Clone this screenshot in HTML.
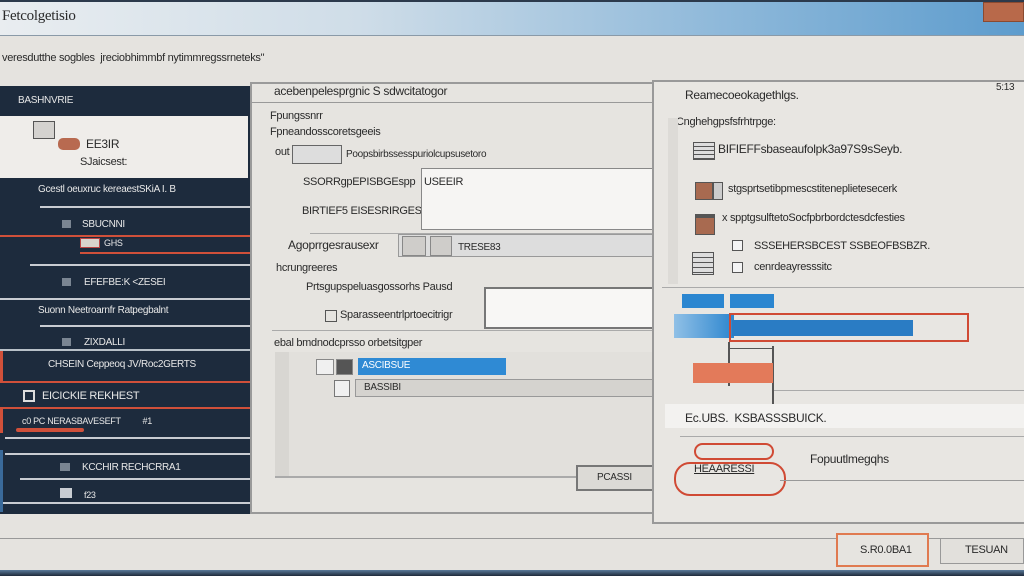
<!DOCTYPE html>
<html><head><meta charset="utf-8"><style>
*{margin:0;padding:0;box-sizing:border-box}
body{width:1024px;height:576px;overflow:hidden;background:#e5e3df;font-family:"Liberation Sans",sans-serif;position:relative;color:#2a2a2a}
.a{position:absolute}
.t{position:absolute;font-size:11px;white-space:nowrap;letter-spacing:-0.3px}
.w{color:#e8e8e8}
.ln{position:absolute;height:2px;background:#c8ccd2}
.rl{position:absolute;height:2px;background:#d0503a}
</style></head><body>
<div class="a" style="left:0;top:0;width:1024px;height:36px;background:linear-gradient(90deg,#e9edf0 0%,#cfdde8 35%,#8fb9da 70%,#5d9ccd 100%);border-bottom:1px solid #8a9aa8"></div>
<div class="a" style="left:0;top:0;width:1024px;height:2px;background:#2c3a4c"></div>
<div class="t" style="left:2px;top:8px;font-size:15px;font-family:'Liberation Serif',serif">Fetcolgetisio</div>
<div class="a" style="left:983px;top:2px;width:41px;height:20px;background:#b8694a;border:1px solid #8a4a30"></div>
<div class="t" style="left:2px;top:52px;font-size:11px">veresdutthe sogbles &nbsp;jreciobhimmbf nytimmregssrneteks"</div>

<!-- left dark panel -->
<div class="a" style="left:0;top:86px;width:250px;height:428px;background:#1d2b3d"></div>
<div class="t w" style="left:18px;top:95px;font-size:10px">BASHNVRIE</div>
<div class="a" style="left:0;top:116px;width:248px;height:62px;background:#efedea"></div>
<div class="a" style="left:33px;top:121px;width:22px;height:18px;background:#d4d2cf;border:1px solid #555"></div>
<div class="a" style="left:58px;top:138px;width:22px;height:12px;background:#b86a50;border-radius:5px"></div>
<div class="t" style="left:86px;top:137px;font-size:12px">EE3IR</div>
<div class="t" style="left:80px;top:156px;font-size:11px">SJaicsest:</div>
<div class="t w" style="left:38px;top:184px;font-size:10px">Gcestl oeuxruc kereaestSKiA I. B</div>
<div class="ln" style="left:40px;top:206px;width:210px"></div>
<div class="a" style="left:62px;top:220px;width:9px;height:8px;background:#7a8592"></div>
<div class="t w" style="left:82px;top:219px;font-size:10px">SBUCNNI</div>
<div class="rl" style="left:0;top:235px;width:250px"></div>
<div class="a" style="left:80px;top:238px;width:20px;height:10px;background:#d9d3cc;border:1px solid #b44"></div>
<div class="t w" style="left:104px;top:238px;font-size:9px">GHS</div>
<div class="rl" style="left:80px;top:252px;width:170px"></div>
<div class="ln" style="left:30px;top:264px;width:220px"></div>
<div class="a" style="left:62px;top:278px;width:9px;height:8px;background:#7a8592"></div>
<div class="t w" style="left:84px;top:277px;font-size:10px">EFEFBE:K &lt;ZESEI</div>
<div class="ln" style="left:0;top:298px;width:250px"></div>
<div class="t w" style="left:38px;top:305px;font-size:10px">Suonn Neetroarnfr Ratpegbalnt</div>
<div class="ln" style="left:40px;top:325px;width:210px"></div>
<div class="a" style="left:62px;top:338px;width:9px;height:8px;background:#7a8592"></div>
<div class="t w" style="left:84px;top:337px;font-size:10px">ZIXDALLI</div>
<div class="ln" style="left:0;top:349px;width:250px;background:#b8c0c8"></div>
<div class="a" style="left:0;top:351px;width:3px;height:30px;background:#d0503a"></div>
<div class="t w" style="left:48px;top:359px;font-size:10px">CHSEIN Ceppeoq JV/Roc2GERTS</div>
<div class="rl" style="left:0;top:381px;width:250px"></div>
<div class="a" style="left:23px;top:390px;width:12px;height:12px;border:2px solid #ddd"></div>
<div class="t w" style="left:42px;top:390px;font-size:11px">EICICKIE REKHEST</div>
<div class="rl" style="left:0;top:407px;width:250px"></div>
<div class="a" style="left:0;top:409px;width:3px;height:24px;background:#d0503a"></div>
<div class="t w" style="left:22px;top:416px;font-size:9px">c0 PC NERASBAVESEFT &nbsp;&nbsp;&nbsp;&nbsp;&nbsp;&nbsp;&nbsp;&nbsp;&nbsp;#1</div>
<div class="a" style="left:16px;top:428px;width:68px;height:4px;border-radius:3px;background:#d0503a"></div>
<div class="ln" style="left:5px;top:437px;width:245px"></div>
<div class="ln" style="left:5px;top:453px;width:245px"></div>
<div class="a" style="left:60px;top:463px;width:10px;height:8px;background:#7a8592"></div>
<div class="t w" style="left:82px;top:462px;font-size:10px">KCCHIR RECHCRRA1</div>
<div class="ln" style="left:20px;top:478px;width:230px"></div>
<div class="a" style="left:60px;top:488px;width:12px;height:10px;background:#c8ccd2"></div>
<div class="t w" style="left:84px;top:490px;font-size:9px">f23</div>
<div class="ln" style="left:0;top:502px;width:250px"></div>
<div class="a" style="left:0;top:450px;width:3px;height:62px;background:#3a6a9a"></div>

<!-- middle panel -->
<div class="a" style="left:250px;top:82px;width:404px;height:432px;background:#e6e4e0;border:2px solid #9a9a9a;border-right:none"></div>
<div class="a" style="left:252px;top:102px;width:400px;height:1px;background:#999"></div>
<div class="t" style="left:274px;top:84px;font-size:12px">acebenpelesprgnic S sdwcitatogor</div>
<div class="t" style="left:270px;top:110px;font-size:11px">Fpungssnrr</div>
<div class="t" style="left:270px;top:126px;font-size:11px">Fpneandosscoretsgeeis</div>
<div class="t" style="left:275px;top:146px;font-size:11px">out</div>
<div class="a" style="left:292px;top:145px;width:50px;height:19px;border:1px solid #666;background:#ddd"></div>
<div class="t" style="left:346px;top:149px;font-size:10px">Poopsbirbssesspuriolcupsusetoro</div>
<div class="t" style="left:303px;top:176px;font-size:11px">SSORRgpEPISBGEspp</div>
<div class="t" style="left:302px;top:205px;font-size:11px">BIRTIEF5 EISESRIRGES</div>
<div class="a" style="left:421px;top:168px;width:232px;height:62px;background:#f6f5f3;border:1px solid #888"></div>
<div class="t" style="left:424px;top:176px;font-size:11px">USEEIR</div>
<div class="a" style="left:310px;top:233px;width:342px;height:1px;background:#aaa"></div>
<div class="t" style="left:288px;top:238px;font-size:12px">Agoprrgesrausexr</div>
<div class="a" style="left:398px;top:234px;width:255px;height:23px;background:#ddd;border:1px solid #999"></div>
<div class="a" style="left:402px;top:236px;width:24px;height:20px;background:#cfcdca;border:1px solid #888"></div>
<div class="a" style="left:430px;top:236px;width:22px;height:20px;background:#cfcdca;border:1px solid #888"></div>
<div class="t" style="left:458px;top:242px;font-size:10px">TRESE83</div>
<div class="t" style="left:276px;top:262px;font-size:11px">hcrungreeres</div>
<div class="t" style="left:306px;top:281px;font-size:11px">Prtsgupspeluasgossorhs Pausd</div>
<div class="a" style="left:325px;top:310px;width:12px;height:12px;border:1px solid #555"></div>
<div class="t" style="left:340px;top:309px;font-size:11px">Sparasseentrlprtoecitrigr</div>
<div class="a" style="left:484px;top:287px;width:170px;height:42px;background:#f8f7f5;border:2px solid #777"></div>
<div class="a" style="left:272px;top:330px;width:382px;height:1px;background:#aaa"></div>
<div class="t" style="left:274px;top:337px;font-size:11px">ebal bmdnodcprsso orbetsitgper</div>
<div class="a" style="left:275px;top:352px;width:379px;height:126px;background:#e2e0dc;border-left:14px solid #d8d6d2"></div>
<div class="a" style="left:275px;top:476px;width:379px;height:2px;background:#aaa"></div>
<div class="a" style="left:316px;top:359px;width:18px;height:16px;background:#f0f0f0;border:1px solid #888"></div>
<div class="a" style="left:336px;top:359px;width:17px;height:16px;background:#555;border:1px solid #888"></div>
<div class="a" style="left:358px;top:358px;width:148px;height:17px;background:#2f8ad4"></div>
<div class="t" style="left:362px;top:360px;font-size:10px;color:#fff">ASCIBSUE</div>
<div class="a" style="left:334px;top:380px;width:16px;height:17px;background:#f0f0f0;border:1px solid #777"></div>
<div class="a" style="left:355px;top:379px;width:299px;height:18px;background:#d5d3cf;border:1px solid #999"></div>
<div class="t" style="left:364px;top:382px;font-size:10px">BASSIBI</div>
<div class="a" style="left:576px;top:465px;width:78px;height:26px;background:#dcdad6;border:2px solid #777"></div>
<div class="t" style="left:597px;top:472px;font-size:10px">PCASSI</div>
<div class="a" style="left:252px;top:512px;width:402px;height:2px;background:#999"></div>

<!-- right panel -->
<div class="a" style="left:652px;top:80px;width:372px;height:444px;background:#e8e6e2;border:2px solid #999;border-right:none"></div>
<div class="t" style="left:685px;top:88px;font-size:12px">Reamecoeokagethlgs.</div>
<div class="t" style="left:996px;top:82px;font-size:10px">5:13</div>
<div class="t" style="left:676px;top:116px;font-size:11px">Cnghehgpsfsfrhtrpge:</div>
<div class="a" style="left:668px;top:118px;width:10px;height:166px;background:#dddbd7"></div>
<div class="a" style="left:693px;top:142px;width:22px;height:18px;border:1px solid #555;background:repeating-linear-gradient(#ddd 0 3px,#555 3px 4px)"></div>
<div class="t" style="left:718px;top:142px;font-size:12px">BIFIEFFsbaseaufolpk3a97S9sSeyb.</div>
<div class="a" style="left:695px;top:182px;width:18px;height:18px;background:#a86a50;border:1px solid #555"></div>
<div class="a" style="left:713px;top:182px;width:10px;height:18px;background:#ccc;border:1px solid #555"></div>
<div class="t" style="left:728px;top:183px;font-size:11px">stgsprtsetibpmescstiteneplietesecerk</div>
<div class="a" style="left:695px;top:214px;width:20px;height:21px;background:#a86a50;border:1px solid #555;border-top:4px solid #555"></div>
<div class="t" style="left:722px;top:212px;font-size:11px">x spptgsulftetoSocfpbrbordctesdcfesties</div>
<div class="a" style="left:732px;top:240px;width:11px;height:11px;border:1px solid #555;background:#f4f4f4"></div>
<div class="t" style="left:754px;top:240px;font-size:11px">SSSEHERSBCEST SSBEOFBSBZR.</div>
<div class="a" style="left:692px;top:252px;width:22px;height:23px;border:1px solid #555;background:repeating-linear-gradient(#ddd 0 4px,#555 4px 5px)"></div>
<div class="a" style="left:732px;top:262px;width:11px;height:11px;border:1px solid #555;background:#f4f4f4"></div>
<div class="t" style="left:754px;top:261px;font-size:11px">cenrdeayresssitc</div>
<div class="a" style="left:662px;top:287px;width:362px;height:1px;background:#aaa"></div>
<div class="a" style="left:682px;top:294px;width:42px;height:14px;background:#2b86d0"></div>
<div class="a" style="left:730px;top:294px;width:44px;height:14px;background:#2b86d0"></div>
<div class="a" style="left:674px;top:314px;width:60px;height:24px;background:linear-gradient(90deg,#90c0e6,#2d86cf)"></div>
<div class="a" style="left:729px;top:313px;width:240px;height:29px;border:2px solid #d04a34"></div>
<div class="a" style="left:732px;top:320px;width:181px;height:16px;background:#2a7cc4"></div>
<div class="a" style="left:728px;top:342px;width:2px;height:44px;background:#555"></div>
<div class="a" style="left:772px;top:346px;width:2px;height:58px;background:#555"></div>
<div class="a" style="left:730px;top:348px;width:42px;height:1px;background:#555"></div>
<div class="a" style="left:693px;top:363px;width:80px;height:20px;background:#e37a5a"></div>
<div class="a" style="left:774px;top:390px;width:250px;height:1px;background:#aaa"></div>
<div class="a" style="left:665px;top:404px;width:359px;height:24px;background:#f3f2f0"></div>
<div class="t" style="left:685px;top:411px;font-size:12px">Ec.UBS. &nbsp;KSBASSSBUICK.</div>
<div class="a" style="left:680px;top:436px;width:344px;height:1px;background:#aaa"></div>
<div class="a" style="left:694px;top:443px;width:80px;height:17px;border:2px solid #d04a34;border-radius:10px"></div>
<div class="a" style="left:674px;top:462px;width:112px;height:34px;border:2px solid #d04a34;border-radius:16px"></div>
<div class="t" style="left:694px;top:463px;font-size:11px;text-decoration:underline">HEAARESSI</div>
<div class="t" style="left:810px;top:452px;font-size:12px">Fopuutlmegqhs</div>
<div class="a" style="left:780px;top:480px;width:244px;height:1px;background:#999"></div>

<!-- bottom -->
<div class="a" style="left:0;top:538px;width:1024px;height:1px;background:#999"></div>
<div class="a" style="left:836px;top:533px;width:93px;height:34px;background:#e6e4e0;border:2px solid #e07a50"></div>
<div class="t" style="left:860px;top:544px;font-size:11px">S.R0.0BA1</div>
<div class="a" style="left:940px;top:538px;width:84px;height:26px;background:#e2e0dc;border:1px solid #999"></div>
<div class="t" style="left:965px;top:544px;font-size:11px">TESUAN</div>
<div class="a" style="left:0;top:570px;width:1024px;height:6px;background:linear-gradient(#5a7a9a,#1e2a3a)"></div>
</body></html>
